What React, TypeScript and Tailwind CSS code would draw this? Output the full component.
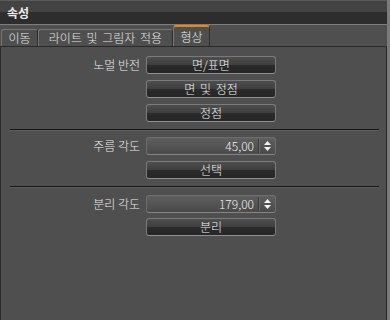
import React from "react";

const F = "font-['Noto_Sans_CJK_KR','Noto_Sans_CJK_SC',sans-serif]";

function Btn({ label }: { label: string }) {
  return (
    <div className="flex h-[18px] w-[130px] items-center justify-center rounded-[3px] border border-[#7a7a7a] border-b-[#909090] bg-[linear-gradient(to_bottom,#4e4e4e_0%,#3e3e3e_50%,#2b2b2b_52%,#262626_100%)] text-[12px] font-light leading-none text-[#f2f2f2] [word-spacing:2px]">
      {label}
    </div>
  );
}

function NumField({ value }: { value: string }) {
  return (
    <div className="flex h-[18px] w-[130px] items-stretch rounded-[3px] border border-[#6e6e6e] border-b-[#858585] bg-[linear-gradient(to_bottom,#5f5f5f_0%,#545454_50%,#4a4a4a_100%)]">
      <div className="flex flex-1 items-center justify-end pr-[4px] text-[12px] font-light leading-none text-[#f2f2f2]">
        {value}
      </div>
      <div className="my-[1px] w-[1px] bg-[#3a3a3a]" />
      <div className="my-[1px] w-[1px] bg-[#6a6a6a]" />
      <div className="flex w-[15px] flex-col items-center justify-center gap-[2px]">
        <svg width="7" height="4" viewBox="0 0 7 4">
          <polygon points="0,4 7,4 3.5,0" fill="#f2f2f2" />
        </svg>
        <svg width="7" height="4" viewBox="0 0 7 4">
          <polygon points="0,0 7,0 3.5,4" fill="#f2f2f2" />
        </svg>
      </div>
    </div>
  );
}

function Row({ label, children }: { label?: string; children: React.ReactNode }) {
  return (
    <div className="flex items-center">
      <div className="w-[145px] pr-[6px] text-right text-[12px] font-light leading-none text-[#ececec]">
        {label ?? ""}
      </div>
      {children}
    </div>
  );
}

function Sep() {
  return (
    <div className="ml-[9px] w-[369px]">
      <div className="h-[1px] bg-[#151515]" />
      <div className="h-[1px] bg-[#5e5e5e]" />
    </div>
  );
}

export default function App() {
  return (
    <div className={`flex h-[320px] w-[390px] overflow-hidden bg-[#4f4f4f] ${F}`}>
      <div className="flex min-w-0 flex-1 flex-col">
        {/* title */}
        <div className="flex h-[24px] items-center border-t border-[#595959] bg-[linear-gradient(to_bottom,#434343_0%,#434343_48%,#2d2d2d_48%,#2d2d2d_100%)] pl-[7px] text-[12px] font-bold leading-none text-[#ececec]">
          속성
        </div>
        {/* tabs */}
        <div className="flex h-[22px] items-end border-t border-[#7e7e7e] bg-[#4f4f4f] pl-[1px]">
          <div className="flex h-[17px] w-[37px] items-center justify-center rounded-t-[3px] border-l border-t border-r border-[#767676] border-r-[#2c2c2c] text-[12px] font-light leading-none text-[#e6e6e6]">
            이동
          </div>
          <div className="flex h-[17px] w-[135px] items-center justify-center rounded-t-[3px] border-l border-t border-r border-[#767676] border-r-[#2c2c2c] text-[12px] font-light leading-none text-[#e6e6e6] [word-spacing:2px]">
            라이트 및 그림자 적용
          </div>
          <div className="flex h-[21px] w-[37px] items-center justify-center rounded-t-[3px] border-l border-r border-t-2 border-[#7a7a7a] border-r-[#2c2c2c] border-t-[#e3861d] pt-[1px] text-[12px] font-light leading-none text-[#f0f0f0]">
            형상
          </div>
        </div>
        {/* panel */}
        <div className="flex flex-1 flex-col border-l border-r border-t border-[#2a2a2a] pt-[9px]">
          <Row label="노멀 반전">
            <Btn label="면/표면" />
          </Row>
          <div className="mt-[6px]">
            <Row>
              <Btn label="면 및 정점" />
            </Row>
          </div>
          <div className="mt-[6px]">
            <Row>
              <Btn label="정점" />
            </Row>
          </div>
          <div className="mt-[7px]">
            <Sep />
          </div>
          <div className="mt-[6px]">
            <Row label="주름 각도">
              <NumField value="45,00" />
            </Row>
          </div>
          <div className="mt-[6px]">
            <Row>
              <Btn label="선택" />
            </Row>
          </div>
          <div className="mt-[7px]">
            <Sep />
          </div>
          <div className="mt-[7px]">
            <Row label="분리 각도">
              <NumField value="179,00" />
            </Row>
          </div>
          <div className="mt-[5px]">
            <Row>
              <Btn label="분리" />
            </Row>
          </div>
        </div>
      </div>
      <div className="w-[3px] bg-[#7b7b7b]" />
    </div>
  );
}
